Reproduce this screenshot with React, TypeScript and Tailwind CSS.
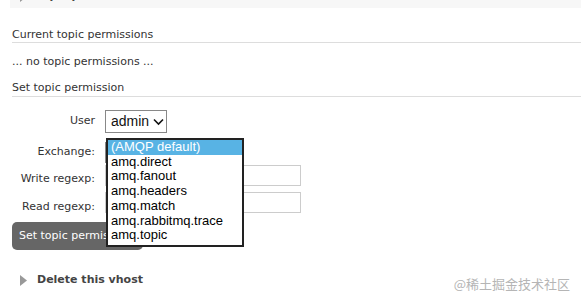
import React from "react";

const exchanges = [
  "(AMQP default)",
  "amq.direct",
  "amq.fanout",
  "amq.headers",
  "amq.match",
  "amq.rabbitmq.trace",
  "amq.topic",
];

const Tri = () => (
  <svg width="7" height="11" viewBox="0 0 7 11" className="shrink-0">
    <path d="M0 0 L7 5.5 L0 11 Z" fill="#999" />
  </svg>
);

const App = () => {
  return (
    <div
      className="relative w-[581px] h-[302px] overflow-hidden bg-white text-[#333] text-[11px]"
      style={{ fontFamily: '"DejaVu Sans", Verdana, sans-serif' }}
    >
      {/* header band, cut off at the top */}
      <div className="ml-[10px] h-[24px] -mt-[16px] bg-[#f7f7f7] flex items-center gap-[9px] pl-[10px]">
        <Tri />
        <span className="font-bold text-[11px] text-[#444]">Topic permissions</span>
      </div>

      <div className="pl-[12px] pt-[20px]">
        <div className="border-b border-[#ddd] leading-[14px]">Current topic permissions</div>
        <div className="leading-[14px] mt-[12px]">... no topic permissions ...</div>
        <div className="border-b border-[#ddd] leading-[14px] mt-[12px] pb-[1px]">Set topic permission</div>

        {/* form */}
        <div className="mt-[13px] flex flex-col">
          <div className="flex items-center h-[23px]">
            <div className="w-[93px] text-right pr-[10px]">User</div>
            <div className="h-[23px] w-[62px] border border-[#888] flex items-center pl-[5px] gap-[4px] text-[14px] text-[#111]" style={{ fontFamily: '"Liberation Sans", Arial, sans-serif' }}>
              admin
              <svg width="11" height="8" viewBox="0 0 11 8">
                <path d="M1 1.5 L5.5 6 L10 1.5" stroke="#111" strokeWidth="1.6" fill="none" />
              </svg>
            </div>
          </div>
          <div className="flex items-center h-[21px] mt-[9px]">
            <div className="w-[93px] text-right pr-[10px]">Exchange:</div>
            <div className="h-[21px] w-[120px] border border-[#888]" />
          </div>
          <div className="flex items-start h-[21px] mt-[2px]">
            <div className="w-[103px] text-right pr-[10px] pt-[7px] leading-[14px] -ml-[10px]">Write regexp:</div>
            <div className="h-[21px] w-[196px] border border-[#ccc]" />
          </div>
          <div className="flex items-start h-[21px] mt-[6px]">
            <div className="w-[103px] text-right pr-[10px] pt-[8px] leading-[14px] -ml-[10px]">Read regexp:</div>
            <div className="h-[21px] w-[196px] border border-[#ccc]" />
          </div>
          <div className="mt-[9px]">
            <button className="h-[28px] w-[131px] rounded-[5px] bg-[#666] text-white text-[11px] text-left pl-[7px] overflow-hidden whitespace-nowrap">
              Set topic permission
            </button>
          </div>
        </div>
      </div>

      <div className="flex items-center gap-[10px] pl-[20px] mt-[22px]">
        <Tri />
        <span className="font-bold text-[11px] text-[#444]">Delete this vhost</span>
      </div>

      {/* open dropdown list */}
      <div
        className="absolute left-[106px] top-[138px] w-[138px] h-[109px] border-2 border-[#222] bg-white text-[13px] leading-[14.7px] text-black"
        style={{ fontFamily: '"Liberation Sans", Arial, sans-serif' }}
      >
        {exchanges.map((x, i) => (
          <div key={x} className={i === 0 ? "bg-[#58b3e4] text-white pl-[3px]" : "pl-[3px]"}>
            {x}
          </div>
        ))}
      </div>

      <div
        className="absolute right-[11px] bottom-[9px] text-[13px] text-[#b5b5b5]"
        style={{ fontFamily: '"Noto Sans CJK SC", sans-serif' }}
      >
        @稀土掘金技术社区
      </div>
    </div>
  );
};

export default App;
